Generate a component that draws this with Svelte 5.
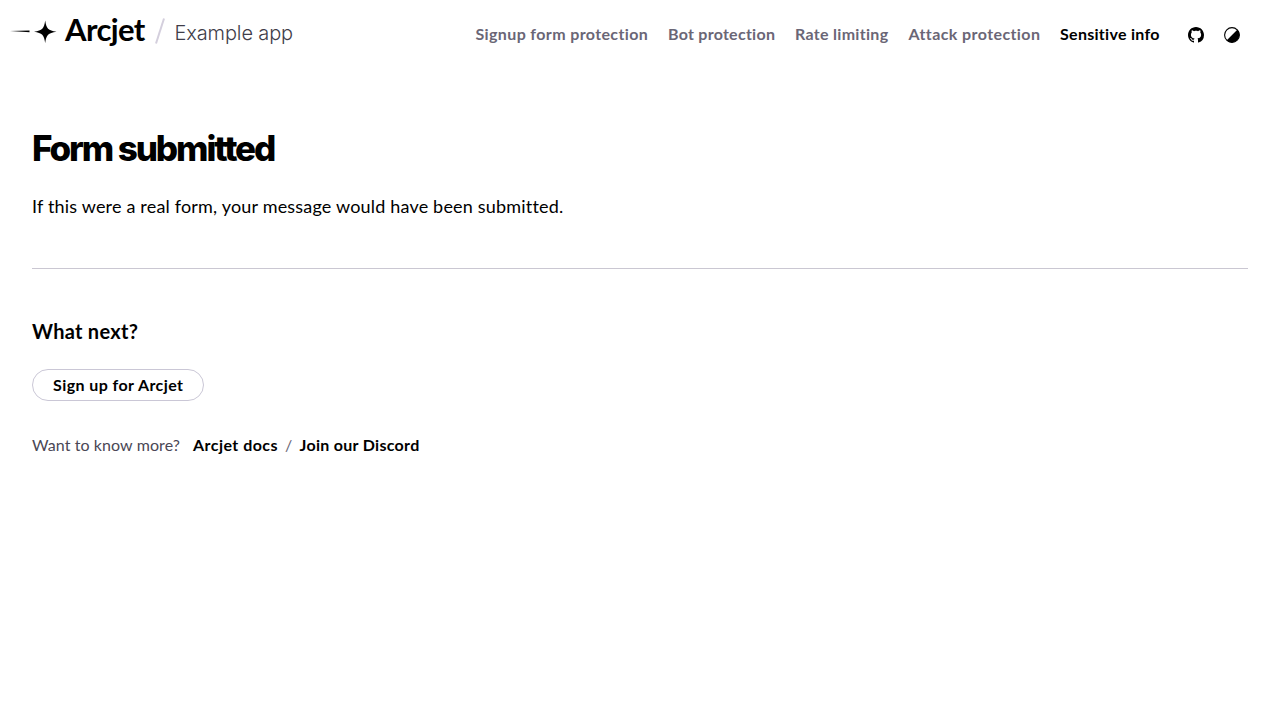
<script>
  const links = [
    { label: 'Signup form protection', width: 172.5, tracking: 0.37 },
    { label: 'Bot protection', width: 107, tracking: 0.26 },
    { label: 'Rate limiting', width: 93.5, tracking: 0.3 },
    { label: 'Attack protection', width: 131.5, tracking: 0.4 },
    { label: 'Sensitive info', width: 100, tracking: 0.29, active: true }
  ];
</script>

<header>
  <a class="brand" href="#home">
    <svg class="mark" width="48" height="24" viewBox="0 0 48 24" aria-hidden="true">
      <path d="M0 11.1 L19.5 10.6 V12.3 L16 11.9 Z" />
      <path d="M35.2 .5 C36.4 8.6 38 10.4 46.5 11.7 C38 13 36.4 14.8 35.2 23 C34 14.8 32.4 13 24 11.7 C32.4 10.4 34 8.6 35.2 .5Z" />
    </svg>
    <span class="name">Arcjet</span>
    <svg class="divider" width="10" height="26" viewBox="0 0 10 26" aria-hidden="true">
      <path d="M1 25.5 L9 .5" />
    </svg>
    <span class="app">Example app</span>
  </a>
  <nav>
    {#each links as link}
      <a
        href="#demo"
        class:active={link.active}
        style:width={`${link.width}px`}
        style:letter-spacing={`${link.tracking}px`}>{link.label}</a>
    {/each}
    <div class="icons">
      <svg width="16" height="16" viewBox="0 0 16 16" aria-label="GitHub">
        <path d="M8 0C3.58 0 0 3.58 0 8c0 3.54 2.29 6.53 5.47 7.59.4.07.55-.17.55-.38 0-.19-.01-.82-.01-1.49-2.01.37-2.53-.49-2.69-.94-.09-.23-.48-.94-.82-1.13-.28-.15-.68-.52-.01-.53.63-.01 1.08.58 1.23.82.72 1.21 1.87.87 2.33.66.07-.52.28-.87.51-1.07-1.78-.2-3.64-.89-3.64-3.95 0-.87.31-1.59.82-2.15-.08-.2-.36-1.02.08-2.12 0 0 .67-.21 2.2.82.64-.18 1.32-.27 2-.27s1.36.09 2 .27c1.53-1.04 2.2-.82 2.2-.82.44 1.1.16 1.92.08 2.12.51.56.82 1.27.82 2.15 0 3.07-1.87 3.75-3.65 3.95.29.25.54.73.54 1.48v2.2c0 .21.15.46.55.38A8.01 8.01 0 0 0 16 8c0-4.42-3.58-8-8-8Z" />
      </svg>
      <svg width="16" height="16" viewBox="0 0 16 16" aria-label="Theme">
        <circle cx="8" cy="8" r="7.4" fill="#fff" stroke="#000" stroke-width="1.1" />
        <path d="M13.5 2.5 A7.8 7.8 0 0 1 2.5 13.5Z" />
      </svg>
    </div>
  </nav>
</header>

<main>
  <h1>Form submitted</h1>
  <p class="lead">If this were a real form, your message would have been submitted.</p>
  <hr />
  <h2>What next?</h2>
  <a class="button" href="#signup">Sign up for Arcjet</a>
  <div class="more">
    <span class="question">Want to know more?</span>
    <a class="docs" href="#docs">Arcjet docs</a>
    <span class="slash">/</span>
    <a class="discord" href="#discord">Join our Discord</a>
  </div>
</main>

<style>
  :global(body) {
    margin: 0;
    background: #fff;
    color: #000;
    font-family: Lato, sans-serif;
    font-variant-ligatures: none;
  }
  a {
    color: inherit;
    text-decoration: none;
    white-space: nowrap;
  }
  header {
    display: flex;
    justify-content: space-between;
    height: 70px;
    padding: 0 40px 0 10px;
    box-sizing: border-box;
  }
  .brand {
    display: flex;
    align-items: flex-start;
  }
  .mark {
    margin-top: 20px;
  }
  .name {
    width: 80px;
    margin: 10px 0 0 7px;
    font-size: 31px;
    font-weight: 700;
    line-height: 38px;
    letter-spacing: -0.6px;
  }
  .divider {
    margin: 18px 0 0 9.5px;
    fill: none;
    stroke: #d4cfdd;
    stroke-width: 2;
  }
  .app {
    margin: 21px 0 0 10px;
    font: 300 20px/24px Inter, sans-serif;
    letter-spacing: -0.13px;
    color: #3f3d49;
  }
  nav {
    display: flex;
    align-items: center;
    gap: 20px;
    font-size: 16px;
    font-weight: 700;
    color: #6a6676;
  }
  nav a {
    padding-bottom: 3px;
    line-height: 20px;
  }
  nav .active {
    color: #000;
  }
  .icons {
    display: flex;
    gap: 20px;
    margin-left: 8px;
  }
  main {
    padding: 56px 32px 0;
  }
  h1 {
    margin: 0;
    font: 800 35px/44px Inter, sans-serif;
    letter-spacing: -2.1px;
  }
  .lead {
    margin: 22px 0 0;
    font-size: 18px;
    line-height: 28px;
    letter-spacing: 0.185px;
  }
  hr {
    height: 1px;
    margin: 48px 0 0;
    border: 0;
    background: #cac7d2;
  }
  h2 {
    margin: 48px 0 0;
    font-size: 20px;
    line-height: 28px;
    letter-spacing: 0.28px;
  }
  .button {
    display: block;
    width: 172px;
    height: 32px;
    margin-top: 24px;
    padding-left: 20px;
    border: 1px solid #cac7d6;
    border-radius: 16px;
    box-sizing: border-box;
    font-size: 16px;
    font-weight: 700;
    line-height: 30px;
    letter-spacing: 0.42px;
  }
  .more {
    display: flex;
    margin-top: 32px;
    font-size: 16px;
    line-height: 24px;
    color: #4a4755;
  }
  .question {
    width: 161px;
    letter-spacing: 0.09px;
  }
  .more a {
    color: #000;
    font-weight: 700;
  }
  .docs {
    width: 92px;
    letter-spacing: 0.46px;
  }
  .slash {
    width: 14.5px;
    color: #6a6676;
  }
  .discord {
    letter-spacing: 0.3px;
  }
</style>
